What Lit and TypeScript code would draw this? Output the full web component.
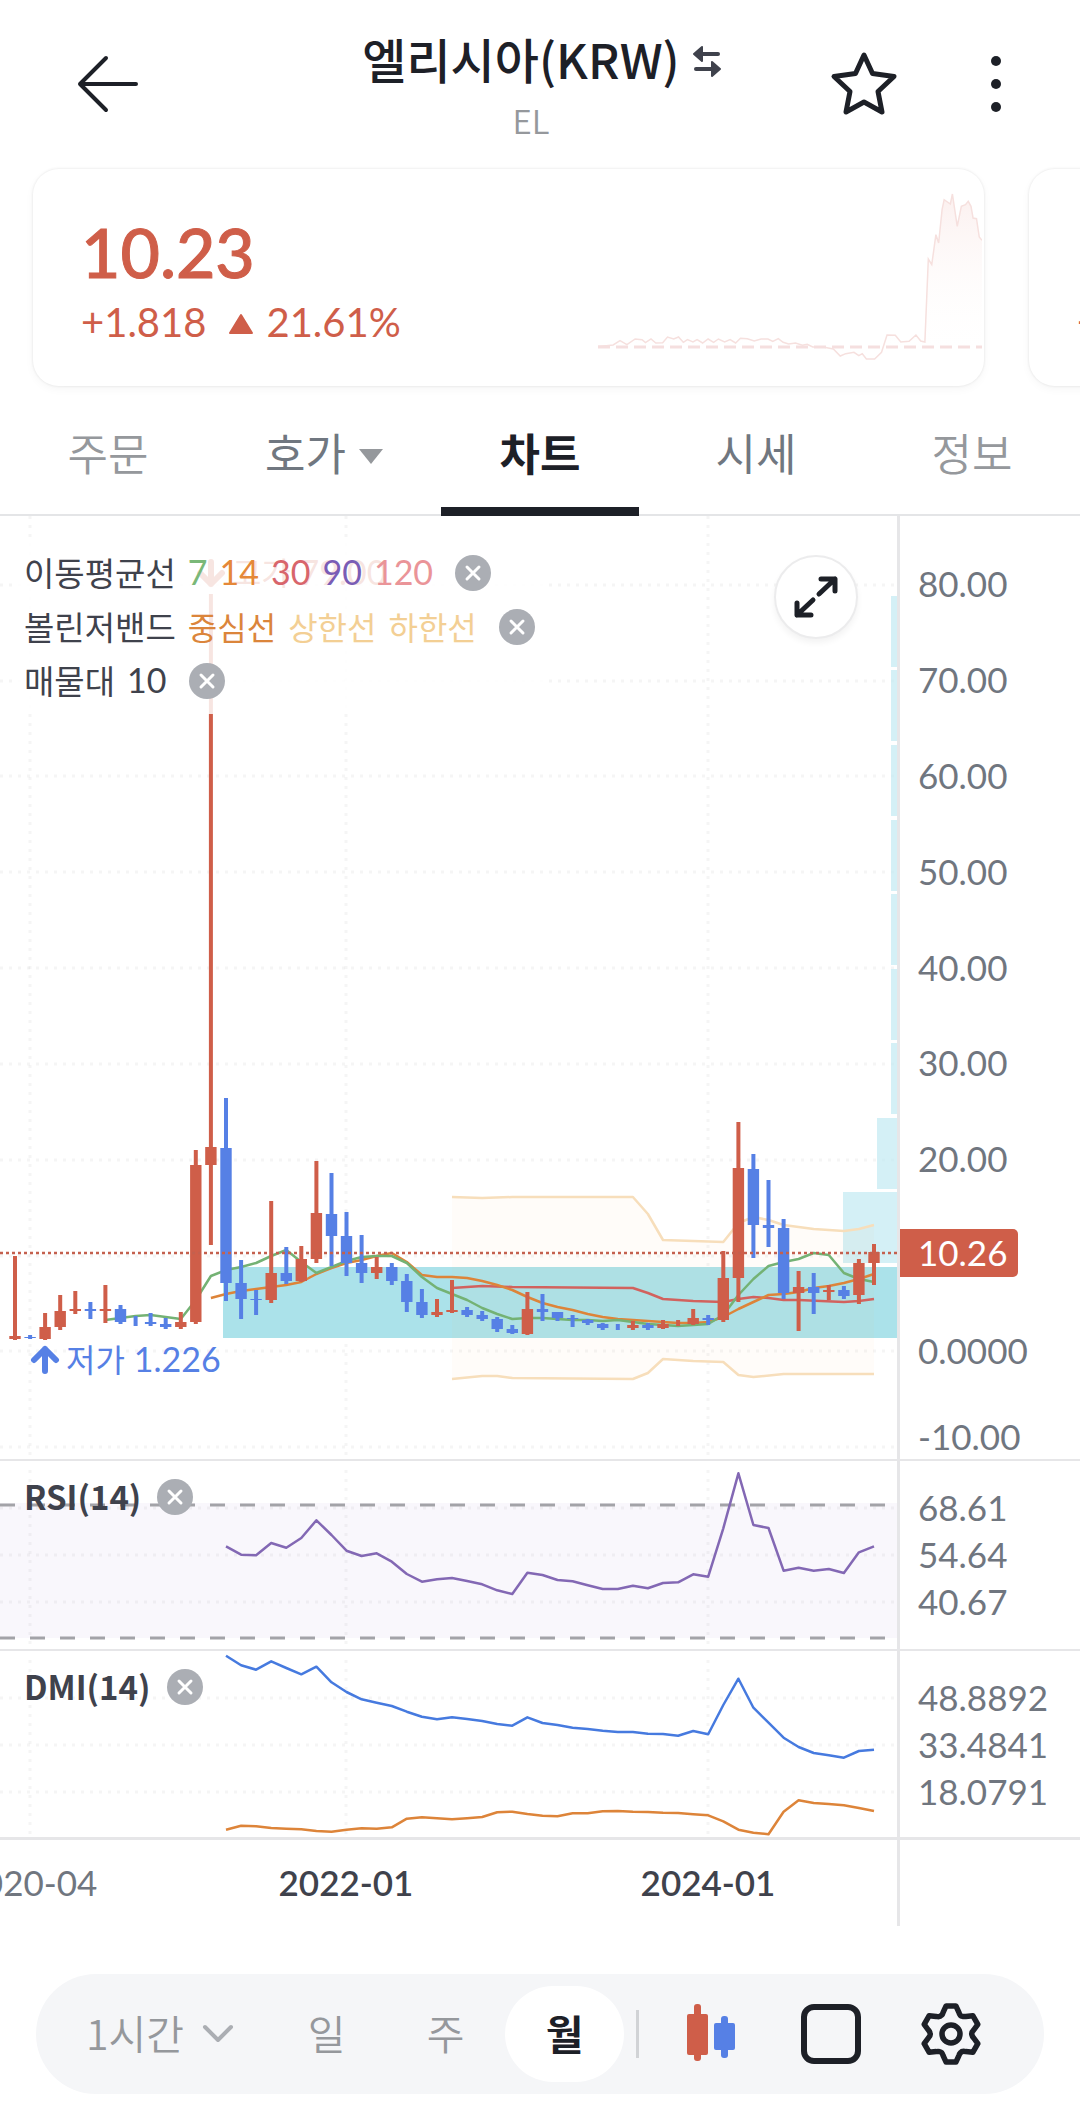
import { LitElement, html, svg, css } from "lit";
import { customElement } from "lit/decorators.js";
import { classMap } from "lit/directives/class-map.js";

type Candle = [dir: "u" | "d", high: number, top: number, bottom: number, low: number, thin?: boolean];

const PLOT_W = 897;
const xAt = (i: number) => Math.round((15 + i * 15.07) * 10) / 10;

const CANDLES: Candle[] = [
  ["u", 1256, 1336, 1339, 1340],
  ["d", 1335, 1337, 1338, 1339],
  ["u", 1313, 1327, 1339, 1340],
  ["u", 1295, 1311, 1327, 1330],
  ["u", 1291, 1309, 1311, 1314],
  ["d", 1302, 1309, 1311, 1319],
  ["u", 1285, 1309, 1311, 1323],
  ["d", 1305, 1309, 1322, 1324],
  ["d", 1316, 1316, 1326, 1326, true],
  ["d", 1313, 1322, 1324, 1326],
  ["d", 1318, 1324, 1327, 1329],
  ["u", 1312, 1322, 1327, 1329],
  ["u", 1150, 1165, 1322, 1324],
  ["u", 594, 1147, 1165, 1245],
  ["d", 1098, 1148, 1283, 1301],
  ["d", 1260, 1283, 1299, 1319],
  ["d", 1290, 1299, 1300, 1315],
  ["u", 1201, 1273, 1300, 1303],
  ["d", 1247, 1273, 1281, 1284],
  ["u", 1246, 1259, 1281, 1282],
  ["u", 1161, 1213, 1259, 1263],
  ["d", 1173, 1214, 1236, 1266],
  ["d", 1212, 1236, 1263, 1276],
  ["d", 1235, 1263, 1273, 1283],
  ["u", 1257, 1267, 1273, 1279],
  ["d", 1263, 1267, 1281, 1285],
  ["d", 1274, 1281, 1302, 1312],
  ["d", 1289, 1302, 1315, 1318],
  ["u", 1299, 1312, 1315, 1317],
  ["u", 1280, 1310, 1312, 1313],
  ["d", 1307, 1310, 1315, 1317],
  ["d", 1311, 1315, 1319, 1321],
  ["d", 1317, 1319, 1329, 1332],
  ["d", 1325, 1329, 1333, 1334],
  ["u", 1292, 1309, 1334, 1335],
  ["d", 1294, 1309, 1312, 1321],
  ["d", 1312, 1312, 1318, 1321],
  ["d", 1315, 1318, 1319, 1327],
  ["d", 1319, 1320, 1323, 1325],
  ["d", 1323, 1324, 1328, 1330],
  ["d", 1324, 1324, 1330, 1330, true],
  ["u", 1321, 1325, 1328, 1330],
  ["d", 1323, 1325, 1328, 1330],
  ["u", 1320, 1324, 1328, 1329],
  ["u", 1320, 1320, 1326, 1326, true],
  ["u", 1309, 1318, 1324, 1325],
  ["d", 1315, 1318, 1320, 1325],
  ["u", 1251, 1278, 1320, 1322],
  ["u", 1122, 1168, 1278, 1302],
  ["d", 1154, 1169, 1225, 1258],
  ["d", 1180, 1225, 1228, 1247],
  ["d", 1219, 1228, 1293, 1299],
  ["u", 1271, 1287, 1293, 1331],
  ["d", 1273, 1287, 1293, 1314],
  ["u", 1285, 1290, 1292, 1300],
  ["d", 1286, 1290, 1296, 1299],
  ["u", 1259, 1263, 1295, 1304],
  ["u", 1244, 1252, 1263, 1285],
];

const MA7 = [
  1320, 1318, 1316, 1315, 1317, 1319, 1300, 1276, 1270, 1267, 1263, 1256, 1250, 1262, 1273, 1267, 1261,
  1257, 1256, 1256, 1263, 1277, 1288, 1294, 1300, 1308, 1314, 1319, 1318, 1318, 1319, 1320, 1320, 1321,
  1320, 1322, 1324, 1325, 1326, 1325, 1324, 1315, 1295, 1279, 1266, 1262, 1259, 1253, 1255, 1273, 1279, 1282,
];
const MA14 = [
  1298, 1294, 1291, 1289, 1287, 1285, 1282, 1274, 1268, 1263, 1260, 1256, 1253, 1262, 1275, 1277, 1277,
  1278, 1281, 1285, 1290, 1297, 1303, 1307, 1310, 1314, 1317, 1319, 1320, 1321, 1322, 1323, 1323, 1322,
  1317, 1309, 1302, 1295, 1294, 1292, 1288, 1286, 1283, 1279, 1274,
];
const MA30: [number, number][] = [
  [29, 1288], [31, 1286], [33, 1287], [41, 1288], [42, 1293], [43, 1299], [45, 1301], [47, 1302], [48, 1299],
  [49, 1297], [50, 1298], [51, 1300], [52, 1300], [55, 1302], [56, 1301], [57, 1299],
];
const UPPER: [number, number][] = [
  [29, 1197], [31, 1198], [33, 1197], [41, 1197], [42, 1214], [43, 1240], [45, 1241], [47, 1242], [48, 1223],
  [49, 1217], [50, 1220], [51, 1225], [53, 1229], [54, 1230], [55, 1231], [56, 1229], [57, 1225],
];
const LOWER: [number, number][] = [
  [29, 1379], [31, 1376], [32, 1376], [33, 1378], [41, 1379], [42, 1373], [43, 1359], [45, 1361], [47, 1362],
  [48, 1375], [49, 1377], [51, 1374], [57, 1374],
];

// Oscillator samples, in thirds of a pixel from the top of the RSI pane's frame.
const RSI = [
  289, 314, 316, 279, 293, 264, 211, 255, 302, 318, 310, 335, 372, 395, 388, 384, 393, 403, 421, 432, 368, 375,
  390, 394, 406, 417, 417, 407, 415, 399, 397, 373, 380, 235, 70, 225, 234, 362, 353, 362, 357, 369, 307, 289,
];
const ADX = [
  617, 646, 659, 634, 654, 673, 650, 697, 726, 748, 758, 768, 785, 800, 808, 802, 807, 813, 822, 827, 802, 819,
  825, 833, 837, 842, 846, 846, 851, 852, 857, 843, 853, 765, 686, 773, 818, 863, 891, 909, 916, 923, 903, 899,
];
const DI = [
  1139, 1127, 1129, 1134, 1136, 1138, 1143, 1145, 1139, 1135, 1136, 1132, 1106, 1102, 1105, 1108, 1105, 1101,
  1087, 1085, 1092, 1097, 1099, 1090, 1090, 1084, 1083, 1085, 1086, 1088, 1089, 1093, 1096, 1114, 1139, 1148,
  1153, 1085, 1051, 1059, 1062, 1066, 1074, 1083,
];

const SPARK =
  "868,590 880,588 890,586 900,573 910,585 922,568 932,570 937,579 945,568 952,580 962,579 969,562 978,568 " +
  "985,562 992,578 998,570 1006,577 1012,570 1020,580 1028,568 1036,578 1043,568 1052,577 1060,570 1068,580 " +
  "1075,566 1085,567 1095,574 1105,568 1115,568 1122,575 1130,567 1137,578 1145,583 1155,580 1165,587 " +
  "1172,584 1180,592 1195,592 1210,598 1220,619 1228,612 1240,608 1247,618 1252,612 1258,628 1270,628 " +
  "1280,608 1288,556 1300,557 1308,577 1320,575 1330,556 1337,574 1343,577 1348,328 1353,345 1359,255 " +
  "1363,280 1368,180 1371,150 1380,163 1383,133 1390,230 1396,170 1402,165 1406,155 1410,170 1413,205 " +
  "1418,207 1422,262 1426,272";

const PROFILE: [x: number, y: number, strong?: boolean][] = [
  [891, 596], [891, 670], [891, 745], [891, 820], [891, 894], [891, 969], [891, 1043], [877, 1118], [843, 1192],
  [223, 1267, true],
];

const GRID_X = [30, 346, 708];
const PRICE_GRID = [585, 681, 776, 872, 968, 1064, 1160, 1256, 1351, 1447];

const series = (values: number[], start: number, map = (v: number) => v) =>
  values.map((v, k) => `${xAt(start + k)},${map(v)}`).join(" ");
const sparse = (pts: [number, number][]) => pts.map(([i, y]) => `${xAt(i)},${y}`).join(" ");
const osc = (v: number) => Math.round((1450 + v / 3) * 10) / 10;

const gearPath = (() => {
  const pts: string[] = [];
  const at = (deg: number, r: number) => {
    const a = ((deg - 90) * Math.PI) / 180;
    return `${(32 + r * Math.cos(a)).toFixed(1)} ${(32 + r * Math.sin(a)).toFixed(1)}`;
  };
  for (let k = 0; k < 6; k++) {
    const c = k * 60;
    pts.push(`${k ? "L" : "M"}${at(c - 10, 28.5)}L${at(c + 10, 28.5)}L${at(c + 20, 23)}Q${at(c + 26, 20)} ${at(c + 33, 21)}Q${at(c + 37, 21.5)} ${at(c + 40, 23)}`);
  }
  return pts.join("") + "Z";
})();

const closeIcon = html`<svg viewBox="0 0 36 36" aria-hidden="true">
  <circle cx="18" cy="18" r="18" fill="#abaeb4" />
  <path d="M12 12l12 12M24 12L12 24" stroke="#fff" stroke-width="3" stroke-linecap="round" />
</svg>`;

const grid = (rows: number[], top: number, bottom: number) => svg`
  <g stroke="#000" stroke-opacity="0.04" stroke-width="3" stroke-dasharray="3 6">
    ${rows.map((y) => svg`<line x1="0" x2=${PLOT_W} y1=${y} y2=${y} />`)}
    ${GRID_X.map((x) => svg`<line x1=${x} x2=${x} y1=${top} y2=${bottom} />`)}
  </g>`;

@customElement("chart-screen-header")
export class ChartScreenHeader extends LitElement {
  static styles = css`
    :host { display: block; }
    .bar {
      display: grid;
      grid-template-columns: 1fr auto 1fr;
      height: 169px;
      box-sizing: border-box;
      padding: 28px 68px 0 72px;
    }
    button { border: 0; padding: 0; background: none; display: flex; }
    .back { width: 72px; height: 72px; margin-top: 20px; }
    .titles { display: flex; flex-direction: column; align-items: center; }
    h1 { margin: 0; font-size: 48px; font-weight: 500; line-height: 60px; color: #1d2027; }
    .name { display: flex; align-items: center; gap: 12px; }
    .swap { width: 30px; height: 36px; margin-top: 6px; }
    .symbol { margin: 0; padding-right: 22px; font-size: 33px; line-height: 64px; color: #95989c; font-weight: 350; }
    .actions { display: flex; justify-content: flex-end; gap: 80px; margin-top: 20px; }
    .star { width: 72px; height: 72px; }
    .more { width: 32px; height: 72px; }
    svg { width: 100%; height: 100%; }
  `;
  render() {
    return html`<header class="bar">
      <button class="back" aria-label="뒤로">
        <svg viewBox="0 0 72 72" fill="none" stroke="#1d2027" stroke-width="4" stroke-linecap="round" stroke-linejoin="round">
          <path d="M64 36H8M34 10L8 36l26 26" />
        </svg>
      </button>
      <div class="titles">
        <div class="name">
          <h1>엘리시아(KRW)</h1>
          <button class="swap" aria-label="마켓 전환">
            <svg viewBox="0 0 30 36" fill="#3f424c" stroke="#3f424c" stroke-linejoin="round" stroke-linecap="round">
              <path d="M2 11L10 4v14Z" stroke-width="2" /><path d="M10 11h16" stroke-width="4" />
              <path d="M28 26L20 19v14Z" stroke-width="2" /><path d="M20 26H4" stroke-width="4" />
            </svg>
          </button>
        </div>
        <p class="symbol">EL</p>
      </div>
      <div class="actions">
        <button class="star" aria-label="관심">
          <svg viewBox="0 0 72 72" fill="none" stroke="#1d2027" stroke-width="5" stroke-linejoin="round">
            <path d="M36 7L44.500 25.500L66 28.500L50 43.500L54 64L36 54L18 64L22 43.500L6 28.500L27.500 25.500Z" />
          </svg>
        </button>
        <button class="more" aria-label="더보기">
          <svg viewBox="0 0 32 72" fill="#1d2027"><circle cx="16" cy="13" r="5" /><circle cx="16" cy="36" r="5" /><circle cx="16" cy="59" r="5" /></svg>
        </button>
      </div>
    </header>`;
  }
}

@customElement("price-cards")
export class PriceCards extends LitElement {
  static styles = css`
    :host { display: block; overflow: hidden; margin-top: -8px; }
    .row { display: flex; gap: 45px; padding: 8px 0 10px 33px; }
    .card {
      flex: 0 0 calc(100% - 96px);
      box-sizing: border-box;
      height: 217px;
      border-radius: 26px;
      background: #fff;
      box-shadow: 0 0 2px 1px rgba(0, 0, 0, 0.05), 0 3px 10px rgba(0, 0, 0, 0.04);
      display: flex;
      justify-content: space-between;
      overflow: hidden;
      color: #cf5e49;
      font-family: Lato, "Noto Sans CJK KR", sans-serif;
    }
    .text { padding: 43px 0 0 48px; }
    .price { margin: 0; font-size: 68px; line-height: 80px; font-weight: 500; -webkit-text-stroke: 1px #cf5e49; }
    .change { margin: 6px 0 0; display: flex; align-items: center; gap: 12px; font-size: 40px; line-height: 48px; }
    .tri { width: 26px; height: 22px; margin: 4px 0 0 10px; }
    .spark { width: 384px; height: 200px; margin: 14px 2px 0 0; }
  `;
  render() {
    return html`<div class="row">
      <section class="card">
        <div class="text">
          <p class="price">10.23</p>
          <p class="change">
            <span>+1.818</span>
            <svg class="tri" viewBox="0 0 26 22"><path d="M13 2L24 20H2Z" fill="#cf5e49" stroke="#cf5e49" stroke-width="2" stroke-linejoin="round" /></svg>
            <span>21.61%</span>
          </p>
        </div>
        <svg class="spark" viewBox="868 100 558 600" preserveAspectRatio="none">
          <defs>
            <linearGradient id="fade" x1="0" y1="0" x2="0" y2="1">
              <stop offset="0" stop-color="#f9e6e4" stop-opacity="0.6" /><stop offset="1" stop-color="#fff" stop-opacity="0" />
            </linearGradient>
          </defs>
          <polygon points="868,592 ${SPARK} 1426,592" fill="url(#fade)" />
          <polyline points=${SPARK} fill="none" stroke="#f6e0de" stroke-width="1.500" vector-effect="non-scaling-stroke" />
          <line x1="868" x2="1426" y1="592" y2="592" stroke="#f5dfdf" stroke-width="3" stroke-dasharray="12 6" vector-effect="non-scaling-stroke" />
        </svg>
      </section>
      <section class="card">
        <div class="text">
          <p class="price">&nbsp;</p>
          <p class="change"><span>+</span></p>
        </div>
      </section>
    </div>`;
  }
}

@customElement("section-tabs")
export class SectionTabs extends LitElement {
  static styles = css`
    :host { display: block; }
    nav { display: grid; grid-template-columns: repeat(5, 1fr); height: 120px; box-shadow: inset 0 -2px #e4e5e7; }
    button {
      border: 0;
      border-bottom: 9px solid transparent;
      margin: 0 9px;
      padding: 0;
      background: none;
      display: flex;
      align-items: center;
      justify-content: center;
      gap: 13px;
      font: 400 44px/60px "Noto Sans CJK KR", sans-serif;
      color: #707780;
    }
    .muted { color: #95989c; font-weight: 350; }
    .active { color: #1d2027; font-weight: 700; border-bottom-color: #1d2027; }
    svg { width: 24px; height: 24px; }
  `;
  private tabs = [
    { label: "주문", muted: true },
    { label: "호가", menu: true },
    { label: "차트", active: true },
    { label: "시세" },
    { label: "정보", muted: true },
  ];
  render() {
    return html`<nav>
      ${this.tabs.map(
        (t) => html`<button class=${classMap({ muted: !!t.muted, active: !!t.active })}>
          ${t.label}${t.menu ? html`<svg viewBox="0 0 24 24"><path d="M0 9h24L12 24Z" fill="#95989c" /></svg>` : ""}
        </button>`
      )}
    </nav>`;
  }
}

@customElement("price-chart")
export class PriceChart extends LitElement {
  static styles = css`
    :host { display: block; --line: #e6e6e8; }
    .pane { display: grid; grid-template-columns: 1fr 180px; border-bottom: 2px solid var(--line); }
    .pane.last { border-bottom-width: 3px; }
    .price { height: 943px; }
    .rsi { height: 188px; }
    .dmi { height: 186px; }
    .plot { position: relative; border-right: 3px solid var(--line); min-width: 0; }
    .plot > svg { display: block; width: 100%; height: 100%; }
    .axis {
      position: relative;
      margin: 0;
      padding: 0 0 0 18px;
      list-style: none;
      display: flex;
      flex-direction: column;
      font: 400 35px/42px Lato, sans-serif;
      color: #70767f;
    }
    .price .axis { padding-top: 19px; padding-bottom: 2px; }
    .axis li { flex: 1; display: flex; align-items: center; }
    .price .axis .floor { flex: 0 0 59px; align-items: flex-end; }
    .rsi .axis { padding-top: 22px; padding-bottom: 25px; }
    .dmi .axis { padding-top: 22px; padding-bottom: 23px; }
    .tag {
      position: absolute;
      left: 0;
      transform: translateY(-50%);
      height: 48px;
      width: 118px;
      box-sizing: border-box;
      padding-left: 18px;
      border-radius: 0 5px 5px 0;
      background: #cf5e49;
      color: #fff;
      line-height: 46px;
    }
    .legend {
      position: absolute;
      left: 12px;
      top: 21px;
      padding: 9px 12px 6px 12px;
      background: rgba(255, 255, 255, 0.84);
    }
    .row { display: flex; align-items: center; gap: 12px; height: 54px; font: 400 32px/40px "Noto Sans CJK KR", sans-serif; color: #3f424c; }
    .row span { padding-bottom: 3px; }
    .row .ko { font-size: 33px; }
    .num { font: 400 34px/40px Lato, sans-serif; }
    .close { width: 36px; height: 36px; border: 0; padding: 0; background: none; display: flex; margin-left: 10px; }
    .close svg { width: 36px; height: 36px; }
    .ma7 { color: #7ab878; }
    .ma14 { color: #e58838; }
    .ma30 { color: #d8656b; }
    .ma90 { color: #7a5db5; }
    .ma120 { color: #ea9498; }
    .mid { color: #db853b; }
    .band { color: #f3cf94; }
    .title { position: absolute; left: 24px; top: 9px; font-weight: 700; font-size: 33px; gap: 6px; }
    .marker {
      position: absolute;
      display: flex;
      align-items: center;
      gap: 6px;
      transform: translateX(-15px);
      font: 400 34px/40px Lato, "Noto Sans CJK KR", sans-serif;
      white-space: nowrap;
    }
    .marker svg { width: 30px; height: 30px; }
    .marker .ko { font-size: 32px; }
    .high { top: 36px; color: #cf5e49; }
    .low { top: 823px; color: #5680e5; }
    .expand {
      position: absolute;
      right: 39px;
      top: 39px;
      width: 84px;
      height: 84px;
      padding: 0;
      border: 2px solid #ececed;
      border-radius: 50%;
      background: #fff;
      box-shadow: 0 4px 6px rgba(0, 0, 0, 0.05);
      display: flex;
      align-items: center;
      justify-content: center;
    }
    .expand svg { width: 48px; height: 48px; }
    .time { display: grid; grid-template-columns: 1fr 180px; height: 86px; }
    .dates { position: relative; border-right: 3px solid var(--line); overflow: hidden; min-width: 0; font: 400 35px/42px Lato, sans-serif; color: #70767f; }
    .dates span { position: absolute; top: 21px; transform: translateX(-50%); }
    .dates .year { color: #3f424c; font-weight: 600; }
  `;

  private close(name: string) {
    return html`<button class="close" aria-label="${name} 닫기">${closeIcon}</button>`;
  }

  private candle([dir, high, top, bottom, low, thin]: Candle, i: number) {
    const x = xAt(i);
    return svg`<g fill=${dir === "u" ? "#cf5e49" : "#5680e5"}>
      <rect x=${x - 2} y=${high} width="4" height=${low - high} />
      ${thin ? "" : svg`<rect x=${x - 5.7} y=${top} width="11.4" height=${bottom - top} />`}
    </g>`;
  }

  private pct(x: number) {
    return `left:${((x / PLOT_W) * 100).toFixed(2)}%`;
  }

  render() {
    const y = (price: number) => 835.5 - price * 9.59;
    return html`
      <div class="pane price">
        <div class="plot">
          <svg viewBox="0 516 897 943" preserveAspectRatio="none">
            ${grid(PRICE_GRID, 516, 1459)}
            ${PROFILE.map(([x, top, strong]) => svg`<rect x=${x} y=${top} width=${PLOT_W - x} height="71" fill=${strong ? "#abe2ea" : "#bfe9f2"} fill-opacity=${strong ? 1 : 0.68} />`)}
            <polygon points="${sparse(UPPER)} ${sparse([...LOWER].reverse())}" fill="#f5b060" fill-opacity="0.04" />
            <g fill="none" stroke-width="2.500" stroke-linejoin="round">
              <polyline points=${sparse(UPPER)} stroke="#f7debb" />
              <polyline points=${sparse(LOWER)} stroke="#f7debb" />
              <polyline points=${sparse(MA30)} stroke="#d2625e" />
              <polyline points=${series(MA14, 13)} stroke="#dd8439" />
              <polyline points=${series(MA7, 6)} stroke="#74b274" />
            </g>
            ${CANDLES.map((c, i) => this.candle(c, i))}
            <line x1="0" x2=${PLOT_W} y1="1253" y2="1253" stroke="#c4604e" stroke-width="2.500" stroke-dasharray="3 3" />
          </svg>
          <div class="marker high" style=${this.pct(xAt(13))}>
            <svg viewBox="0 0 30 30" fill="none" stroke="#cf5e49" stroke-width="6" stroke-linecap="round" stroke-linejoin="round"><path d="M15 4v22M4 15l11 11 11-11" /></svg>
            <span><span class="ko">고가</span> 79.00</span>
          </div>
          <div class="marker low" style=${this.pct(xAt(2))}>
            <svg viewBox="0 0 30 30" fill="none" stroke="#5680e5" stroke-width="6" stroke-linecap="round" stroke-linejoin="round"><path d="M15 26V4M4 15L15 4l11 11" /></svg>
            <span><span class="ko">저가</span> 1.226</span>
          </div>
          <div class="legend">
            <div class="row">
              <span class="ko">이동평균선</span><span class="num ma7">7</span><span class="num ma14">14</span><span class="num ma30">30</span
              ><span class="num ma90">90</span><span class="num ma120">120</span>${this.close("이동평균선")}
            </div>
            <div class="row">
              <span class="ko">볼린저밴드</span><span class="mid">중심선</span><span class="band">상한선</span><span class="band">하한선</span>${this.close("볼린저밴드")}
            </div>
            <div class="row"><span class="ko">매물대</span><span class="num">10</span>${this.close("매물대")}</div>
          </div>
          <button class="expand" aria-label="전체 화면">
            <svg viewBox="0 0 48 48" fill="none" stroke="#1d2027" stroke-width="5" stroke-linecap="round" stroke-linejoin="round">
              <path d="M27 21L43 6M29 6h14v12M21 27L5 42M19 42H5V30" />
            </svg>
          </button>
        </div>
        <ul class="axis">
          <li>80.00</li><li>70.00</li><li>60.00</li><li>50.00</li><li>40.00</li><li>30.00</li><li>20.00</li><li></li>
          <li>0.0000</li><li class="floor">-10.00</li>
          <div class="tag" style="top:${y(10.26).toFixed(0)}px">10.26</div>
        </ul>
      </div>

      <div class="pane rsi">
        <div class="plot">
          <svg viewBox="0 1461 897 188" preserveAspectRatio="none">
            <rect x="0" y="1503" width="897" height="135" fill="#f9f7fc" />
            ${grid([1508, 1555, 1602], 1470, 1649)}
            <g stroke="#a3a3a8" stroke-width="3" stroke-dasharray="15 15">
              <line x1="0" x2="897" y1="1505" y2="1505" /><line x1="0" x2="897" y1="1638" y2="1638" />
            </g>
            <polyline points=${series(RSI, 14, osc)} fill="none" stroke="#8368b4" stroke-width="2.500" stroke-linejoin="round" />
          </svg>
          <div class="row title"><span>RSI(14)</span>${this.close("RSI")}</div>
        </div>
        <ul class="axis"><li>68.61</li><li>54.64</li><li>40.67</li></ul>
      </div>

      <div class="pane dmi last">
        <div class="plot">
          <svg viewBox="0 1651 897 186" preserveAspectRatio="none">
            ${grid([1698, 1745, 1792], 1660, 1837)}
            <g fill="none" stroke-width="2.500" stroke-linejoin="round">
              <polyline points=${series(ADX, 14, osc)} stroke="#467adf" />
              <polyline points=${series(DI, 14, osc)} stroke="#dd8439" />
            </g>
          </svg>
          <div class="row title"><span>DMI(14)</span>${this.close("DMI")}</div>
        </div>
        <ul class="axis"><li>48.8892</li><li>33.4841</li><li>18.0791</li></ul>
      </div>

      <div class="time">
        <div class="dates">
          <span style=${this.pct(30)}>2020-04</span>
          <span class="year" style=${this.pct(346)}>2022-01</span>
          <span class="year" style=${this.pct(708)}>2024-01</span>
        </div>
      </div>
    `;
  }
}

@customElement("interval-toolbar")
export class IntervalToolbar extends LitElement {
  static styles = css`
    :host { display: block; padding: 48px 36px 24px; }
    .bar { display: flex; align-items: center; height: 120px; border-radius: 60px; background: #f5f6f8; padding: 0 33px 0 50px; box-sizing: border-box; }
    button, select { border: 0; margin: 0; padding: 0 0 4px; background: none; font: 350 41px/56px "Noto Sans CJK KR", sans-serif; color: #95989c; }
    select { appearance: none; }
    .hours { display: flex; align-items: center; gap: 18px; flex: 1 0 auto; }
    .hours svg { width: 32px; height: 20px; }
    .unit { flex: 0 0 119px; height: 96px; border-radius: 48px; }
    .on { background: #fff; color: #1d2027; font-weight: 600; }
    .rule { width: 3px; height: 48px; background: #d1d3d6; margin: 0 12px; }
    .tool { flex: 0 0 120px; height: 96px; padding: 0; display: flex; align-items: center; justify-content: center; }
    .tool svg { width: 64px; height: 64px; }
  `;
  render() {
    return html`<div class="bar">
      <label class="hours">
        <select aria-label="시간 단위"><option>1시간</option></select>
        <svg viewBox="0 0 32 20" fill="none" stroke="#abaeb3" stroke-width="4" stroke-linecap="round" stroke-linejoin="round"><path d="M3 3l13 13L29 3" /></svg>
      </label>
      <button class="unit">일</button>
      <button class="unit">주</button>
      <button class="unit on">월</button>
      <span class="rule"></span>
      <button class="tool" aria-label="차트 유형">
        <svg viewBox="0 0 64 64">
          <g fill="#cf5e49"><rect x="8" y="12" width="21" height="41" rx="2" /><rect x="15" y="2" width="7" height="57" rx="3" /></g>
          <g fill="#5680e5"><rect x="35" y="21" width="21" height="27" rx="2" /><rect x="42" y="14" width="7" height="42" rx="3" /></g>
        </svg>
      </button>
      <button class="tool" aria-label="레이아웃">
        <svg viewBox="0 0 64 64"><rect x="5" y="5" width="54" height="54" rx="10" fill="none" stroke="#1d2027" stroke-width="6" /></svg>
      </button>
      <button class="tool" aria-label="설정">
        <svg viewBox="0 0 64 64" fill="none" stroke="#1d2027" stroke-width="5.500" stroke-linejoin="round"><path d=${gearPath} /><circle cx="32" cy="32" r="9" /></svg>
      </button>
    </div>`;
  }
}

@customElement("app-root")
export class AppRoot extends LitElement {
  static styles = css`
    :host { display: block; background: #fff; font-family: "Noto Sans CJK KR", "Noto Sans", sans-serif; color: #1d2027; overflow: hidden; }
  `;
  render() {
    return html`
      <chart-screen-header></chart-screen-header>
      <main>
        <price-cards></price-cards>
        <section-tabs></section-tabs>
        <price-chart></price-chart>
        <interval-toolbar></interval-toolbar>
      </main>
    `;
  }
}
